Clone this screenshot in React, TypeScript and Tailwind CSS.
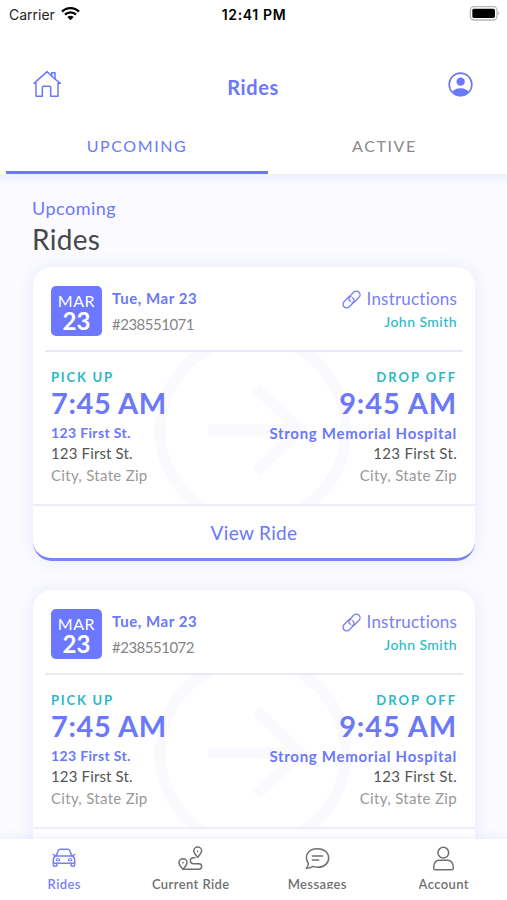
import { useState } from "react";

const rides = [
  { id: "238551071", month: "MAR", day: "23", date: "Tue, Mar 23" },
  { id: "238551072", month: "MAR", day: "23", date: "Tue, Mar 23" },
];

function StatusBar() {
  return (
    <div className="flex h-7 items-center justify-between pl-[9px] pr-[7px] font-['Inter',sans-serif] text-black">
      <div className="flex w-[120px] items-center">
        <span className="text-[14px] text-[#222]">Carrier</span>
        <svg className="-mt-[1px] ml-[6px] h-[14px] w-[19px]" viewBox="0 0 57 42" fill="none" stroke="currentColor" strokeWidth="7">
          <path d="M3 14 C17 0 40 0 54 14" />
          <path d="M12 23 C21 14 36 14 45 23" />
          <path d="M19 30 C25 25 32 25 38 30 L28.500 40 Z" fill="currentColor" stroke="none" />
        </svg>
      </div>
      <span className="-ml-[1px] text-[14px] font-semibold tracking-[0.65px]">12:41 PM</span>
      <div className="flex w-[120px] items-center justify-end">
        <svg className="-mt-[2px] h-[15px] w-[31px]" viewBox="0 0 93 45">
          <rect x="4" y="2" width="80" height="40" rx="11" fill="#fff" stroke="#b9b9b9" strokeWidth="4" />
          <rect x="10" y="8" width="68" height="28" rx="5" fill="#000" />
          <path d="M87 16 Q94 22 87 28 Z" fill="#b9b9b9" />
        </svg>
      </div>
    </div>
  );
}

function HomeIcon() {
  return (
    <svg className="h-[28px] w-[28px]" viewBox="0 0 84 84" fill="none" stroke="currentColor" strokeWidth="4.500" strokeLinejoin="round" strokeLinecap="round">
      <path d="M9 40 H3 L42 5 L56 18 V8 H66 V27 L82 40 H75 V79 H53 V52 Q53 49 50 49 H31 Q28 49 28 52 V79 H9 Z" />
      <path d="M56 18 L66 27" />
    </svg>
  );
}

function ProfileIcon() {
  return (
    <svg className="h-[25px] w-[25px]" viewBox="0 0 75 75">
      <defs>
        <clipPath id="profile">
          <circle cx="37.500" cy="37.500" r="34" />
        </clipPath>
      </defs>
      <circle cx="37.500" cy="37.500" r="34" fill="none" stroke="currentColor" strokeWidth="5" />
      <circle cx="38" cy="29" r="12.500" fill="currentColor" />
      <ellipse cx="37.500" cy="64" rx="25" ry="15" fill="currentColor" clipPath="url(#profile)" />
    </svg>
  );
}

function LinkIcon() {
  return (
    <svg className="h-[19px] w-[19px]" viewBox="0 0 57 57" fill="none" stroke="currentColor" strokeWidth="4" strokeLinecap="round">
      <path d="M25 34 C18 28 20 21 26 16 L35 7 C40 2 47 3 51 7 C55 11 55 18 51 22 L38 35 C36 37 33 38 30 37" />
      <path d="M32 23 C39 29 37 36 31 41 L22 50 C17 55 10 54 6 50 C2 46 2 39 6 35 L19 22 C21 20 24 19 27 20" />
    </svg>
  );
}

function CarIcon() {
  return (
    <svg className="h-[20px] w-[24px]" viewBox="0 0 72 60" fill="none" stroke="currentColor" strokeWidth="4.500" strokeLinecap="round" strokeLinejoin="round">
      <path d="M13 24 L18 9 Q20 4 26 4 H46 Q52 4 54 9 L59 24" />
      <path d="M13 24 H59 Q68 26 68 36 V52 Q68 55 65 55 H60 Q57 55 57 52 V46 H15 V52 Q15 55 12 55 H7 Q4 55 4 52 V36 Q4 26 13 24 Z" />
      <path d="M4 20 L13 24 M68 20 L59 24 M4 46 H15 M57 46 H68" />
      <ellipse cx="18" cy="35" rx="5" ry="3.500" strokeWidth="3.500" />
      <ellipse cx="54" cy="35" rx="5" ry="3.500" strokeWidth="3.500" />
    </svg>
  );
}

function RouteIcon() {
  return (
    <svg className="h-[25px] w-[25px]" viewBox="0 0 75 75" fill="none" stroke="currentColor" strokeWidth="4.500" strokeLinecap="round" strokeLinejoin="round">
      <path d="M15 70 C8 61 3 56 3 50 A12 12 0 0 1 27 50 C27 56 22 61 15 70 Z" />
      <path d="M59 34 C52 25 47 20 47 15 A12 12 0 0 1 71 15 C71 20 66 25 59 34 Z" />
      <path d="M15 70 H62 Q71 70 71 61 Q71 53 62 53 H45 Q37 52 37 44 Q37 36 45 35 H51" />
      <circle cx="15" cy="50" r="2.500" fill="currentColor" stroke="none" />
      <circle cx="59" cy="16" r="2.500" fill="currentColor" stroke="none" />
    </svg>
  );
}

function MessageIcon() {
  return (
    <svg className="h-[23px] w-[25px]" viewBox="0 0 75 69" fill="none" stroke="currentColor" strokeWidth="4.500" strokeLinecap="round" strokeLinejoin="round">
      <path d="M10 49 C-3 29 7 5 38 5 C59 5 71 18 71 33 C71 49 58 61 38 61 Q31 61 24 58 Q15 64 4 64 Q10 58 10 49 Z" />
      <path d="M22 27 H53 M22 39 H41" />
    </svg>
  );
}

function AccountIcon() {
  return (
    <svg className="h-[25px] w-[23px]" viewBox="0 0 69 75" fill="none" stroke="currentColor" strokeWidth="4.500" strokeLinejoin="round">
      <circle cx="34" cy="20" r="16" />
      <path d="M22 43 H46 C57 43 64 52 64 67 Q64 71 60 71 H9 Q5 71 5 67 C5 52 12 43 22 43 Z" />
    </svg>
  );
}

function ArrowWatermark() {
  return (
    <svg className="absolute left-[120px] top-[-22px] h-[200px] w-[200px] text-[#fafafe]" viewBox="0 0 200 200" fill="none" stroke="currentColor" strokeWidth="11">
      <circle cx="100" cy="100" r="93" />
      <path d="M55 100 H142 M103 58 L147 100 L103 142" />
    </svg>
  );
}

function RideCard({ ride }: { ride: (typeof rides)[0] }) {
  return (
    <div className="h-[294px] shrink-0 overflow-hidden rounded-[19px] border-b-[3px] border-[#7883f6] bg-white shadow-[0_0_16px_rgba(107,120,255,0.12)]">
      <div className="mx-3 flex h-[85px] justify-between border-b-2 border-[#e9e9fb] px-[6px] pt-[19px]">
        <div className="flex">
          <div className="flex h-[50px] w-[51px] flex-col items-center rounded-[5px] bg-[#6c78ff] text-white">
            <span className="mt-[5px] text-[16px] leading-[19px] tracking-[0.6px]">{ride.month}</span>
            <span className="text-[24px] font-bold leading-[22px]">{ride.day}</span>
          </div>
          <div className="ml-[10px] flex flex-col">
            <span className="mt-[2px] text-[15px] font-bold leading-5 tracking-[0.55px] text-[#6b78f8]">{ride.date}</span>
            <span className="mt-[6px] text-[15px] leading-5 tracking-[-0.5px] text-[#858585]">#{ride.id}</span>
          </div>
        </div>
        <div className="flex flex-col items-end">
          <div className="mt-[3px] flex items-center text-[#7a7ff5]">
            <LinkIcon />
            <span className="ml-[6px] text-[17px] leading-5 tracking-[0.2px]">Instructions</span>
          </div>
          <span className="mt-[3px] text-[14px] font-medium leading-5 tracking-[0.45px] text-[#2bb8c6]">John Smith</span>
        </div>
      </div>
      <div className="relative h-[152px] overflow-hidden">
        <ArrowWatermark />
        <div className="relative flex justify-between px-[18px] pt-[15px]">
          <div className="flex flex-col">
            <span className="text-[13px] font-bold leading-5 tracking-[1.8px] text-[#2bb8c6]">PICK UP</span>
            <span className="-mt-[1px] text-[29px] font-bold leading-[34px] tracking-[0.6px] text-[#6b78f8]">7:45 AM</span>
            <span className="mt-[3px] text-[14px] font-bold leading-5 tracking-[0.35px] text-[#6b78f8]">123 First St.</span>
            <span className="text-[15px] leading-[21px] tracking-[0.15px] text-[#555]">123 First St.</span>
            <span className="mt-[1px] text-[15px] leading-[21px] tracking-[0.3px] text-[#999]">City, State Zip</span>
          </div>
          <div className="flex flex-col items-end">
            <span className="text-[13px] font-bold leading-5 tracking-[2px] text-[#2bb8c6]">DROP OFF</span>
            <span className="-mt-[1px] text-[29px] font-bold leading-[34px] tracking-[0.9px] text-[#6b78f8]">9:45 AM</span>
            <span className="mt-[3px] text-[15px] font-bold leading-5 tracking-[0.7px] text-[#6b78f8]">Strong Memorial Hospital</span>
            <span className="text-[15px] leading-[21px] tracking-[0.3px] text-[#555]">123 First St.</span>
            <span className="mt-[1px] text-[15px] leading-[21px] tracking-[0.35px] text-[#999]">City, State Zip</span>
          </div>
        </div>
      </div>
      <button className="flex h-[54px] w-full items-center justify-center border-t-2 border-[#ececfd] pt-[2px] text-[19px] tracking-[0.35px] text-[#6b78f8]">
        View Ride
      </button>
    </div>
  );
}

const navItems = [
  { label: "Rides", icon: <CarIcon /> },
  { label: "Current Ride", icon: <RouteIcon /> },
  { label: "Messages", icon: <MessageIcon /> },
  { label: "Account", icon: <AccountIcon /> },
];

export default function App() {
  const [tab, setTab] = useState("UPCOMING");

  return (
    <div className="flex h-[900px] w-[507px] flex-col overflow-hidden bg-white font-['Lato',sans-serif]">
      <StatusBar />
      <header className="flex h-[92px] items-center justify-between pl-[33px] pr-[34px] text-[#6b78f8]">
        <div className="mt-5 w-[60px]">
          <HomeIcon />
        </div>
        <h1 className="mt-[26px] text-[20px] font-bold leading-6 tracking-[0.6px]">Rides</h1>
        <div className="mt-5 flex w-[60px] justify-end">
          <ProfileIcon />
        </div>
      </header>
      <div className="flex h-[54px] shrink-0 px-[6px] text-[16px] tracking-[1.6px]">
        {["UPCOMING", "ACTIVE"].map((name) => (
          <button
            key={name}
            onClick={() => setTab(name)}
            className={
              tab === name
                ? "h-[54px] w-[263px] border-b-[3px] border-[#6c78ff] pt-[1px] text-[#6b78f8]"
                : "h-[54px] w-[234px] border-b-[3px] border-transparent pt-[1px] text-[#8a8a8a]"
            }
          >
            {name}
          </button>
        ))}
      </div>
      <main className="flex h-[665px] shrink-0 flex-col overflow-hidden bg-[#fafaff] px-8 pt-[22px] shadow-[inset_0_10px_10px_-8px_rgba(107,120,255,0.12)]">
        <span className="text-[18px] leading-6 tracking-[0.5px] text-[#6b78f8]">Upcoming</span>
        <h2 className="mt-[1px] text-[28px] leading-9 tracking-[0.3px] text-[#484848]">Rides</h2>
        <div className="ml-[1px] mt-[10px] flex flex-col gap-[29px]">
          {rides.map((ride) => (
            <RideCard key={ride.id} ride={ride} />
          ))}
        </div>
      </main>
      <nav className="relative flex h-[61px] shrink-0 bg-white pl-[1px] shadow-[0_0_10px_rgba(107,120,255,0.12)]">
        {navItems.map((item, i) => (
          <div
            key={item.label}
            className={
              i === 0
                ? "flex flex-1 flex-col items-center text-[#7a7ff5]"
                : "flex flex-1 flex-col items-center text-[#707070]"
            }
          >
            <div className="mt-[6px] flex h-[26px] items-center">{item.icon}</div>
            <span className="mt-[3px] h-[15px] overflow-hidden text-[13px] font-semibold leading-[20px] tracking-[0.4px]">{item.label}</span>
          </div>
        ))}
      </nav>
    </div>
  );
}
